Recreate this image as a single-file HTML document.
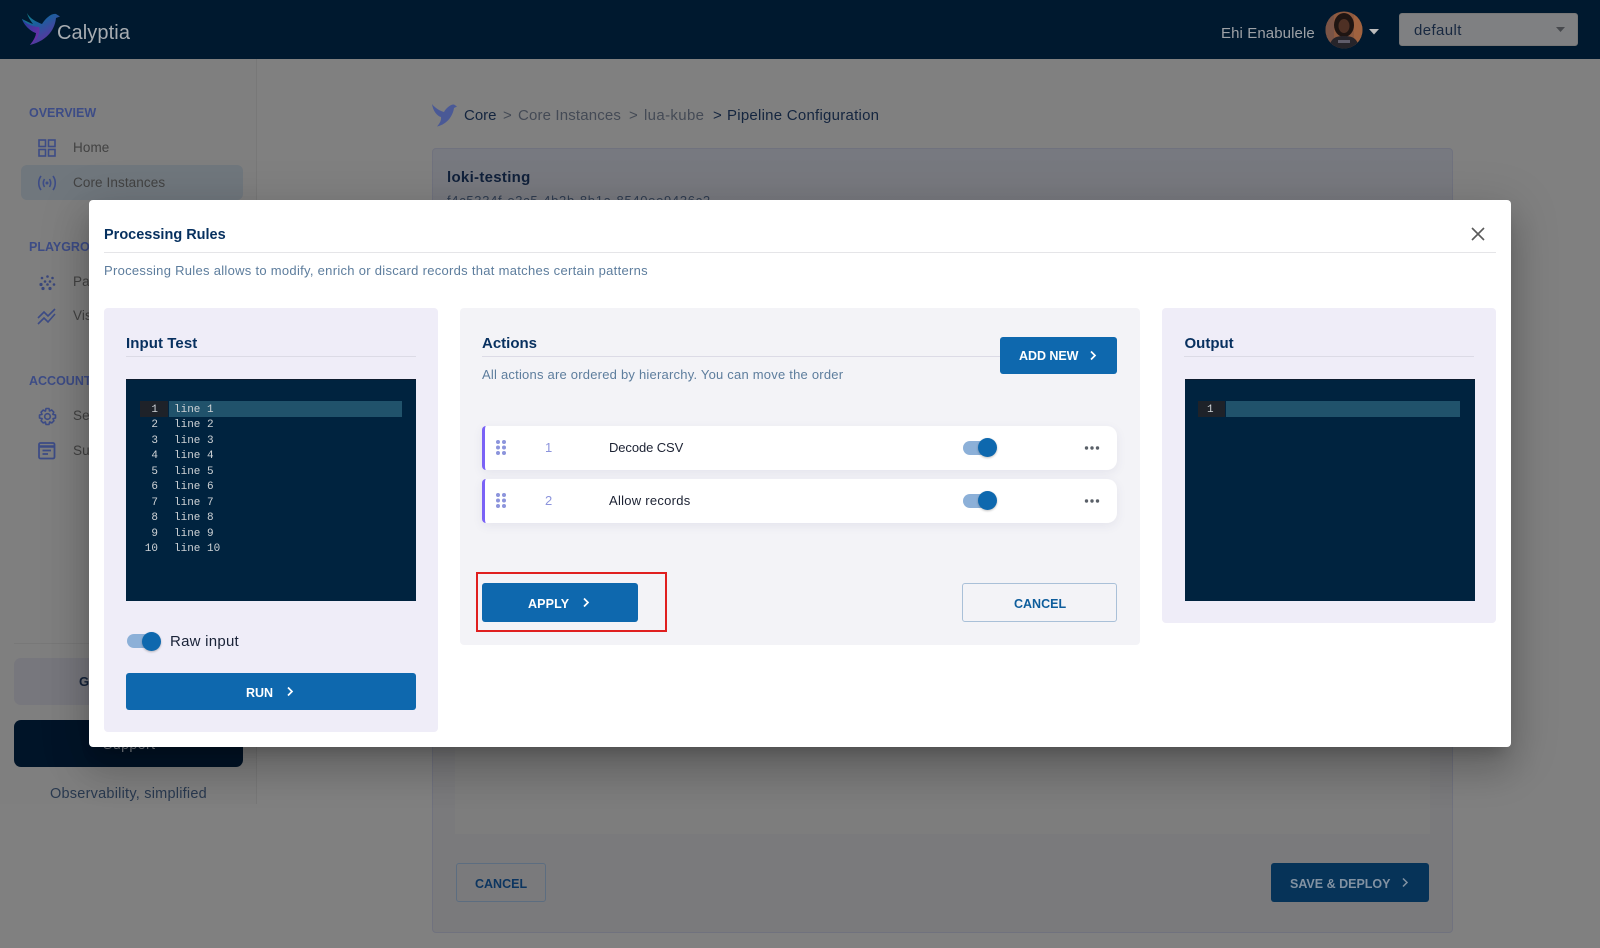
<!DOCTYPE html>
<html><head><meta charset="utf-8"><title>Calyptia - Processing Rules</title>
<style>
*{box-sizing:border-box}
html,body{margin:0;padding:0;width:1600px;height:948px;overflow:hidden;background:#808080}
body{position:relative;font-family:"Liberation Sans",sans-serif}
#w{position:absolute;left:0;top:0;width:1600px;height:948px;overflow:hidden;filter:blur(.3px)}
.a{position:absolute}
.t{position:absolute;white-space:nowrap;line-height:20px;height:20px}
.hdr{left:0;top:0;width:1600px;height:59px;background:#00192f}
.side{left:0;top:59px;width:257px;height:745px;border-right:1px solid #787878;background:#7f7f7f}
.sec{color:#3d4c86;font-size:12.5px;font-weight:bold}
.nav{color:#424242;font-size:13.5px;letter-spacing:.1px}
.card{left:432px;top:148px;width:1021px;height:785px;border:1px solid #70727e;border-radius:4px;background:linear-gradient(#777980,#7a7a7c 120px)}
.modal{left:89px;top:200px;width:1422px;height:547px;background:#fff;border-radius:4px;box-shadow:0 11px 15px -7px rgba(0,0,0,.2),0 24px 38px 3px rgba(0,0,0,.14),0 9px 46px 8px rgba(0,0,0,.12)}
.panel{top:308px;background:#efedf8;border-radius:4px}
.h{color:#07305f;font-size:15px;font-weight:bold}
.rule{height:1px;background:#dcdbe6}
.ed{background:#00233f;border-top:1px solid #0d1b2e}
.mono{position:absolute;font-family:"Liberation Mono",monospace;font-size:11px;line-height:15.55px;color:#cfd3d6;white-space:pre}
.btn{background:#0e68ae;border-radius:3px;color:#fff;font-size:12.5px;font-weight:bold;display:block}
.row{left:482px;width:635px;height:44px;background:#fff;border-left:3px solid #7a62f6;border-radius:4px 10px 10px 4px;box-shadow:0 3px 10px rgba(60,60,110,.08)}
.tr{background:#8cb0d8;border-radius:7px;height:14px}
.kn{background:#0e68ae;border-radius:50%;width:19px;height:19px;box-shadow:0 1px 2px rgba(0,0,0,.25)}
</style></head>
<body>
<div id="w">

<div class="a hdr"></div>
<svg class="a" style="left:21px;top:12px" width="42" height="36" viewBox="0 0 42 36">
<defs>
<linearGradient id="g1" x1="0" y1="0" x2="0.7" y2="1"><stop offset="0" stop-color="#0f8f86"/><stop offset=".4" stop-color="#1b5f9e"/><stop offset="1" stop-color="#6a2aa0"/></linearGradient>
<linearGradient id="g2" x1="0" y1="0" x2="1" y2="1"><stop offset="0" stop-color="#1e3f9b"/><stop offset="1" stop-color="#7b2aa8"/></linearGradient>
</defs>
<path d="M6 1 C9 7 16 10 21 12 C24 7 30 1 35 2 L39 4.5 L35 6 C34 16 28 28 9 33 C13 28 15 24 15 21 C9 19 3 13 1 7 C5 9 9 11 12 12 C9 8 7 5 6 1Z" fill="url(#g1)"/>
<path d="M1 7 C5 12 13 15 18 15 C20 20 16 29 9 33 C13 28 15 24 15 21 C9 19 3 13 1 7Z" fill="url(#g2)"/>
</svg>
<div class="t" style="left:57px;top:22px;font-size:20px;line-height:22px;height:24px;color:#a8adb2;letter-spacing:.1px">Calyptia</div>
<div class="t" style="left:1221px;top:24px;font-size:15px;color:#9da1a6;letter-spacing:.1px">Ehi Enabulele</div>
<svg class="a" style="left:1325px;top:11px" width="38" height="38" viewBox="0 0 38 38">
<defs><clipPath id="av"><circle cx="19" cy="19" r="18.5"/></clipPath></defs>
<g clip-path="url(#av)"><rect width="38" height="38" fill="#8f5a3f"/><rect x="0" width="9" height="38" fill="#7a5446"/><rect x="29" width="9" height="38" fill="#a0623f"/>
<ellipse cx="19" cy="14" rx="10" ry="12" fill="#1f1512"/><ellipse cx="19" cy="15" rx="5.5" ry="7" fill="#4e3024"/><path d="M4 38 C5 27 11 25 19 25 C27 25 33 27 34 38Z" fill="#26242a"/><rect x="13" y="29" width="12" height="3" fill="#5f5c6a"/></g></svg>
<svg class="a" style="left:1368px;top:28px" width="12" height="8"><path d="M1 1H11L6 6.5Z" fill="#bcbcbc"/></svg>
<div class="a" style="left:1399px;top:13px;width:179px;height:33px;background:#7f8082;border-radius:3px;border:1px solid #777"></div>
<div class="t" style="left:1414px;top:21px;font-size:15px;color:#182840;letter-spacing:.4px">default</div>
<svg class="a" style="left:1555px;top:26px" width="11" height="7"><path d="M1 1H10L5.5 6Z" fill="#47494d"/></svg>

<div class="a side"></div>
<div class="t sec" style="left:29px;top:103px">OVERVIEW</div>
<svg class="a" style="left:38px;top:139px" width="18" height="18" fill="none" stroke="#3d4c86" stroke-width="1.6"><rect x="1" y="1" width="6.5" height="6.5"/><rect x="10.5" y="1" width="6.5" height="6.5"/><rect x="1" y="10.5" width="6.5" height="6.5"/><rect x="10.5" y="10.5" width="6.5" height="6.5"/></svg>
<div class="t nav" style="left:73px;top:138px">Home</div>
<div class="a" style="left:21px;top:165px;width:222px;height:35px;background:#70777d;border-radius:6px"></div>
<svg class="a" style="left:37px;top:174px" width="20" height="18" fill="none" stroke="#3d4c86" stroke-width="1.6"><path d="M4 2 C1 6 1 12 4 16M7.5 5 C6 7.5 6 10.5 7.5 13M16 2 C19 6 19 12 16 16M12.5 5 C14 7.5 14 10.5 12.5 13"/><circle cx="10" cy="9" r="1.5" fill="#3d4c86" stroke="none"/></svg>
<div class="t nav" style="left:73px;top:173px">Core Instances</div>
<div class="t sec" style="left:29px;top:237px">PLAYGROUND</div>
<svg class="a" style="left:39px;top:274px" width="17" height="17" fill="#3a477c"><circle cx="3" cy="4" r="1.3"/><circle cx="8.5" cy="2.5" r="1.3"/><circle cx="13.5" cy="4" r="1.3"/><circle cx="6" cy="7.5" r="1.3"/><circle cx="11" cy="7.5" r="1.3"/><circle cx="2" cy="10.5" r="1.6"/><circle cx="8.5" cy="10.5" r="1.3"/><circle cx="15" cy="10.5" r="1.3"/><circle cx="4" cy="14.5" r="1.6"/><circle cx="11" cy="14.5" r="1.6"/></svg>
<div class="t nav" style="left:73px;top:272px">Pa</div>
<svg class="a" style="left:37px;top:307px" width="20" height="19" fill="none" stroke="#3d4c86" stroke-width="1.6"><path d="M1 11 L7 5 L11 9 L18 2M1 17 L7 11 L11 15 L18 7"/></svg>
<div class="t nav" style="left:73px;top:306px">Vis</div>
<div class="t sec" style="left:29px;top:371px">ACCOUNT</div>
<svg class="a" style="left:38px;top:407px" width="19" height="19" viewBox="0 0 19 19" fill="none" stroke="#3d4c86" stroke-width="1.6"><circle cx="9.5" cy="9.5" r="2.8"/><path d="M8 1.5H11L11.500 4L13.700 3L15.800 5.200L14.800 7.300L17.500 8V11L15 11.600L15.900 13.800L13.800 15.900L11.600 14.900L11 17.500H8L7.400 15L5.200 15.900L3.100 13.800L4.100 11.600L1.500 11V8L4 7.400L3.100 5.200L5.200 3.100L7.400 4.100Z" stroke-linejoin="round"/></svg>
<div class="t nav" style="left:73px;top:406px">Se</div>
<svg class="a" style="left:38px;top:442px" width="18" height="18" fill="none" stroke="#3d4c86" stroke-width="1.8"><rect x="1" y="1" width="15.5" height="15.5" rx="1.5"/><path d="M1 4.5H16.5" stroke-width="2.5"/><path d="M4.5 8.5H13M4.500 12H10"/></svg>
<div class="t nav" style="left:73px;top:441px">Su</div>
<div class="a" style="left:14px;top:643px;width:229px;height:1px;background:#787878"></div>
<div class="a" style="left:14px;top:658px;width:229px;height:47px;background:#77777d;border-radius:7px"></div>
<div class="t" style="left:79px;top:672px;font-size:13px;font-weight:bold;color:#14233a">G</div>
<div class="a" style="left:14px;top:720px;width:229px;height:47px;background:#001428;border-radius:7px"></div>
<div class="t" style="left:103px;top:734px;font-size:14px;color:#8a8f96;letter-spacing:.5px">Support</div>
<div class="t" style="left:50px;top:784px;font-size:14.5px;color:#29394f;letter-spacing:.23px">Observability, simplified</div>

<svg class="a" style="left:431px;top:103px" width="27" height="24" viewBox="0 0 27 24"><path d="M1 1 C4 5 9 8 13 9 C15 5 20 1 23 1.5 L26 3.5 L23 5 C22 12 17 21 6 23.5 C9 20 10.5 17 10 14 C6 13 2 8 1 1Z" fill="#4a5996"/></svg>
<div class="t" style="left:464px;top:106px;font-size:15px;color:#14253f">Core</div>
<div class="t" style="left:503px;top:106px;font-size:15px;color:#444a55">&gt;</div>
<div class="t" style="left:518px;top:106px;font-size:15px;color:#444a55;letter-spacing:.15px">Core Instances</div>
<div class="t" style="left:629px;top:106px;font-size:15px;color:#444a55">&gt;</div>
<div class="t" style="left:644px;top:106px;font-size:15px;color:#444a55;letter-spacing:.35px">lua-kube</div>
<div class="t" style="left:713px;top:106px;font-size:15px;color:#14253f">&gt;</div>
<div class="t" style="left:727px;top:106px;font-size:15px;color:#14253f;letter-spacing:.25px">Pipeline Configuration</div>

<div class="a card"></div>
<div class="t" style="left:447px;top:168px;font-size:15px;font-weight:bold;color:#10203a;letter-spacing:.3px">loki-testing</div>
<div class="t" style="left:447px;top:191px;font-size:13px;color:#2f3c50;letter-spacing:.68px">f4c5334f-e3c5-4b2b-8b1a-8540ee9436c2</div>
<div class="a" style="left:455px;top:740px;width:975px;height:94px;background:#7d7d7d"></div>
<div class="a" style="left:456px;top:863px;width:90px;height:39px;border:1px solid #5c6d80;border-radius:3px"></div>
<div class="t" style="left:475px;top:874px;font-size:12.5px;font-weight:bold;color:#0c3560">CANCEL</div>
<div class="a" style="left:1271px;top:863px;width:158px;height:39px;background:#063358;border-radius:3px"></div>
<div class="t" style="left:1290px;top:874px;font-size:12.5px;font-weight:bold;color:#8292a2">SAVE &amp; DEPLOY</div>
<svg class="a" style="left:1401px;top:877px" width="8" height="12" fill="none" stroke="#8292a2" stroke-width="1.5"><path d="M2 1.500L6 5.500L2 9.500"/></svg>

<div class="a modal"></div>
<div class="t" style="left:104px;top:225px;font-size:14.5px;font-weight:bold;color:#06305f">Processing Rules</div>
<svg class="a" style="left:1471px;top:227px" width="14" height="14" fill="none" stroke="#5a5a5a" stroke-width="1.6"><path d="M1 1L13 13M13 1L1 13"/></svg>
<div class="a rule" style="left:104px;top:252px;width:1392px;background:#e5e5e8"></div>
<div class="t" style="left:104px;top:261px;font-size:13px;color:#5d7d9d;letter-spacing:.29px">Processing Rules allows to modify, enrich or discard records that matches certain patterns</div>

<div class="a panel" style="left:104px;width:334px;height:424px"></div>
<div class="t h" style="left:126px;top:334px;letter-spacing:.08px">Input Test</div>
<div class="a rule" style="left:126px;top:356px;width:290px"></div>
<div class="a ed" style="left:126px;top:379px;width:290px;height:222px"></div>
<div class="a" style="left:140px;top:401px;width:28px;height:15.5px;background:#1e2229"></div>
<div class="a" style="left:169px;top:401px;width:233px;height:15.5px;background:#20526b"></div>
<div class="mono" style="left:141px;top:402.500px;width:17px;text-align:right">1
2
3
4
5
6
7
8
9
10</div>
<div class="mono" style="left:174px;top:402.500px">line 1
line 2
line 3
line 4
line 5
line 6
line 7
line 8
line 9
line 10</div>
<div class="a tr" style="left:127px;top:634px;width:24px"></div>
<div class="a kn" style="left:142px;top:632px"></div>
<div class="t" style="left:170px;top:632px;font-size:15px;color:#1a2338;letter-spacing:.25px">Raw input</div>
<div class="a btn" style="left:126px;top:673px;width:290px;height:37px"></div>
<div class="t" style="left:246px;top:683px;font-size:12.5px;font-weight:bold;color:#fff">RUN</div>
<svg class="a" style="left:286px;top:686px" width="8" height="12" fill="none" stroke="#fff" stroke-width="1.7"><path d="M2 1.500L6 5.500L2 9.500"/></svg>

<div class="a panel" style="left:460px;width:680px;height:337px;background:#f3f3f7"></div>
<div class="t h" style="left:482px;top:334px">Actions</div>
<div class="a rule" style="left:482px;top:356px;width:518px"></div>
<div class="t" style="left:482px;top:365px;font-size:13px;color:#5d7d9d;letter-spacing:.22px">All actions are ordered by hierarchy. You can move the order</div>
<div class="a btn" style="left:1000px;top:337px;width:117px;height:37px"></div>
<div class="t" style="left:1019px;top:346px;font-size:12.5px;font-weight:bold;color:#fff;letter-spacing:-.05px">ADD NEW</div>
<svg class="a" style="left:1089px;top:350px" width="8" height="12" fill="none" stroke="#fff" stroke-width="1.7"><path d="M2 1.500L6 5.500L2 9.500"/></svg>

<div class="a row" style="top:426px"></div>
<svg class="a" style="left:496px;top:440px" width="10" height="15" fill="#8c94dc"><circle cx="2" cy="2" r="2"/><circle cx="8" cy="2" r="2"/><circle cx="2" cy="7.5" r="2"/><circle cx="8" cy="7.5" r="2"/><circle cx="2" cy="13" r="2"/><circle cx="8" cy="13" r="2"/></svg>
<div class="t" style="left:545px;top:438px;font-size:13px;color:#8c94dc">1</div>
<div class="t" style="left:609px;top:438px;font-size:13px;color:#1c2233;letter-spacing:-.1px">Decode CSV</div>
<div class="a tr" style="left:963px;top:441px;width:24px"></div>
<div class="a kn" style="left:978px;top:438px"></div>
<svg class="a" style="left:1084px;top:445px" width="16" height="6" fill="#5a6068"><circle cx="2.5" cy="3" r="1.7"/><circle cx="8" cy="3" r="1.7"/><circle cx="13.500" cy="3" r="1.7"/></svg>

<div class="a row" style="top:479px"></div>
<svg class="a" style="left:496px;top:493px" width="10" height="15" fill="#8c94dc"><circle cx="2" cy="2" r="2"/><circle cx="8" cy="2" r="2"/><circle cx="2" cy="7.5" r="2"/><circle cx="8" cy="7.5" r="2"/><circle cx="2" cy="13" r="2"/><circle cx="8" cy="13" r="2"/></svg>
<div class="t" style="left:545px;top:491px;font-size:13px;color:#8c94dc">2</div>
<div class="t" style="left:609px;top:491px;font-size:13px;color:#1c2233;letter-spacing:.27px">Allow records</div>
<div class="a tr" style="left:963px;top:494px;width:24px"></div>
<div class="a kn" style="left:978px;top:491px"></div>
<svg class="a" style="left:1084px;top:498px" width="16" height="6" fill="#5a6068"><circle cx="2.5" cy="3" r="1.7"/><circle cx="8" cy="3" r="1.7"/><circle cx="13.5" cy="3" r="1.7"/></svg>

<div class="a btn" style="left:482px;top:583px;width:156px;height:39px"></div>
<div class="t" style="left:528px;top:594px;font-size:12.5px;font-weight:bold;color:#fff;letter-spacing:.15px">APPLY</div>
<svg class="a" style="left:582px;top:597px" width="8" height="12" fill="none" stroke="#fff" stroke-width="1.7"><path d="M2 1.500L6 5.500L2 9.500"/></svg>
<div class="a" style="left:476px;top:572px;width:191px;height:60px;border:2px solid #e01f1f"></div>
<div class="a" style="left:962px;top:583px;width:155px;height:39px;border:1px solid #a9c0d8;border-radius:3px"></div>
<div class="t" style="left:1014px;top:594px;font-size:12.5px;font-weight:bold;color:#0e5d9c">CANCEL</div>

<div class="a panel" style="left:1162px;width:334px;height:315px"></div>
<div class="t h" style="left:1184.500px;top:334px">Output</div>
<div class="a rule" style="left:1184px;top:356px;width:290px"></div>
<div class="a ed" style="left:1184.500px;top:379px;width:290px;height:222px"></div>
<div class="a" style="left:1198px;top:401px;width:27px;height:15.5px;background:#1e2229"></div>
<div class="a" style="left:1226px;top:401px;width:234px;height:15.5px;background:#20526b"></div>
<div class="mono" style="left:1207px;top:402.500px">1</div>
</div>
</body></html>
